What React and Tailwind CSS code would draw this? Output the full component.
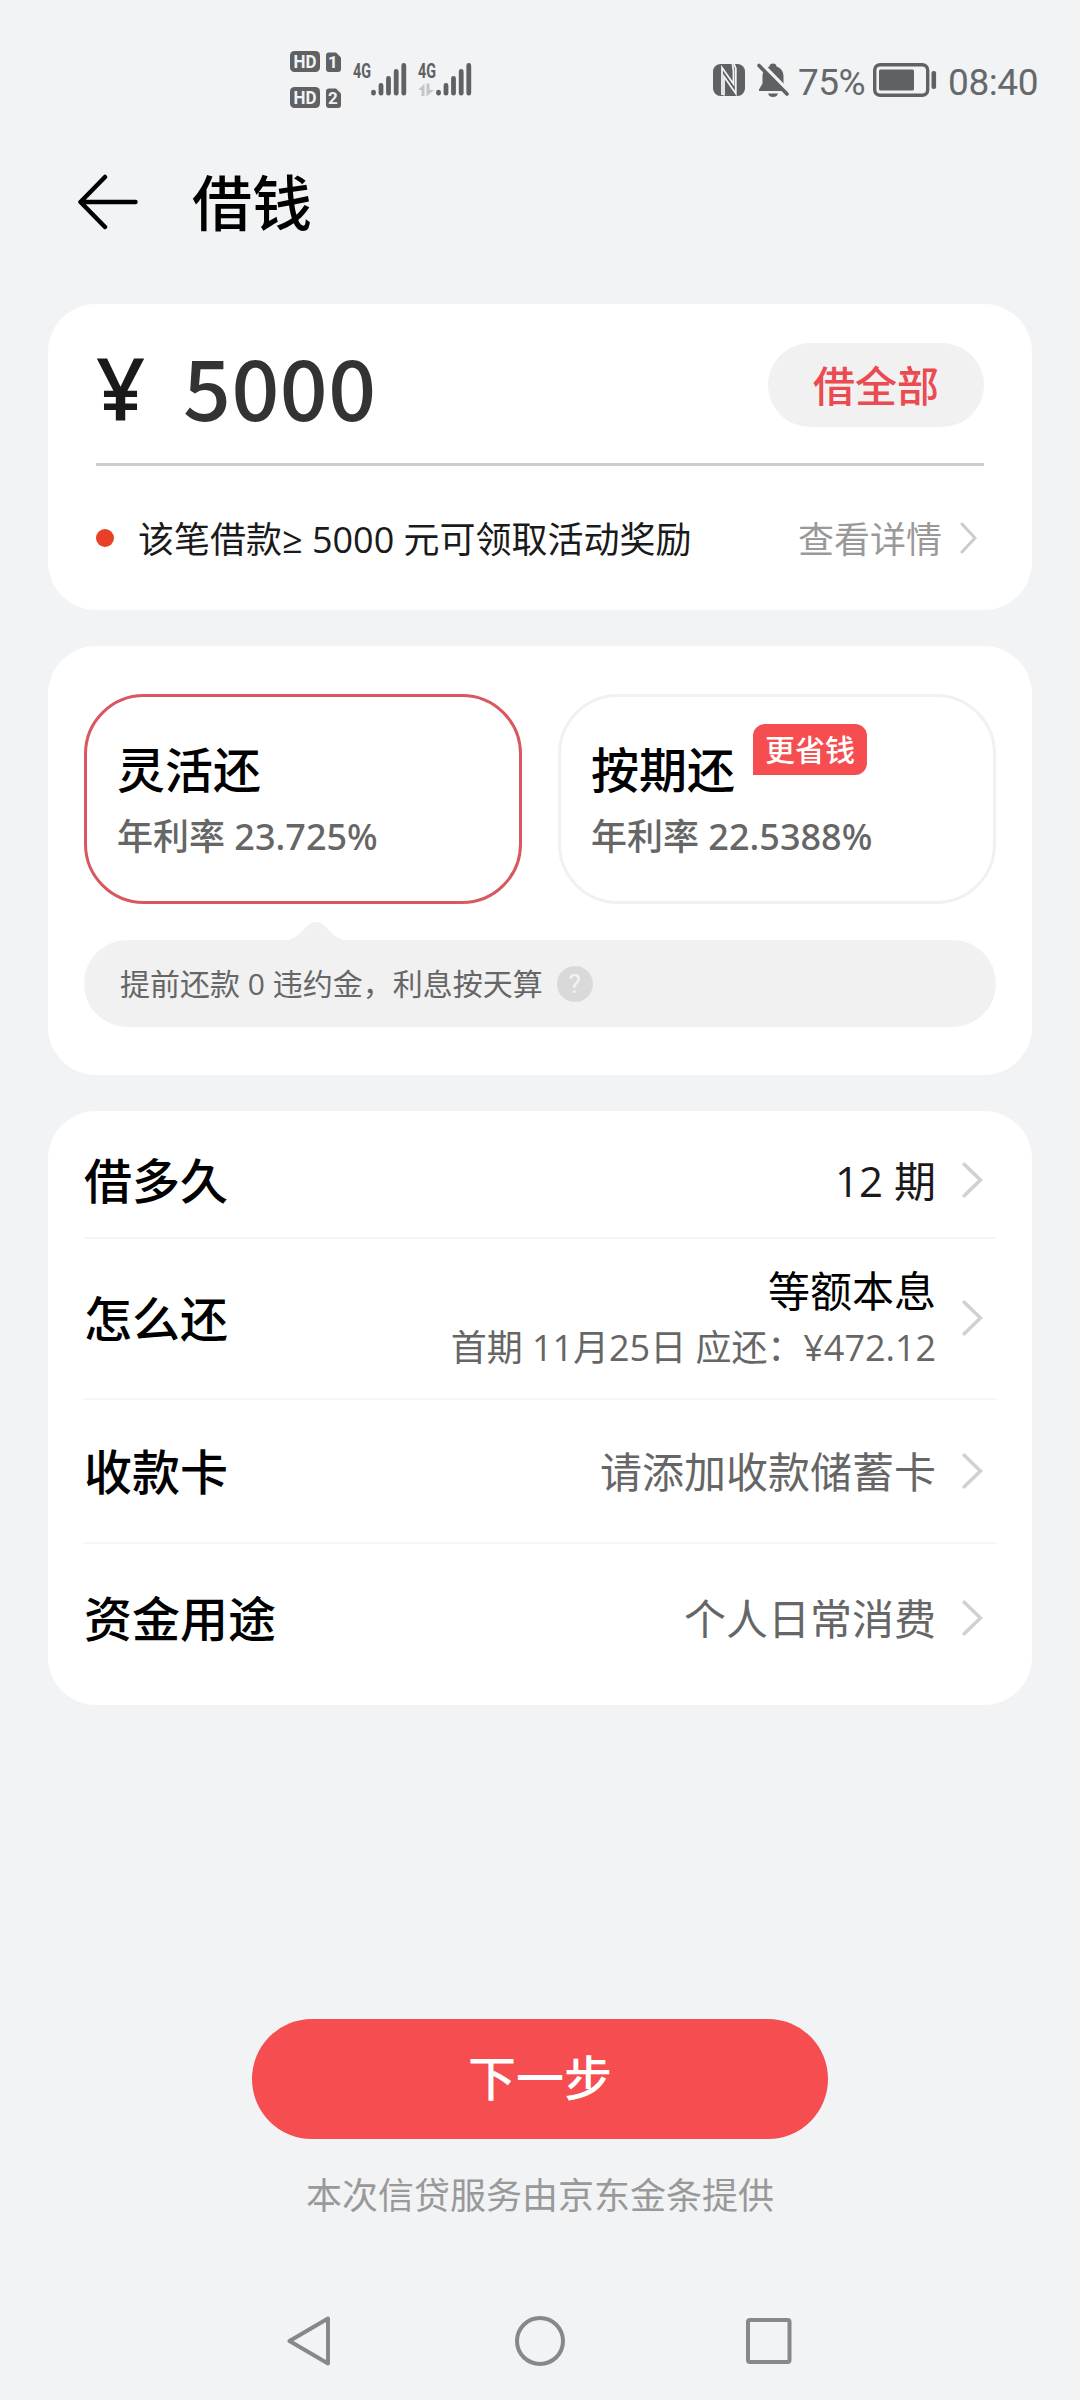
import React from "react";

const INK = "#5f6163";

const plans = [
  { name: "灵活还", rate: "年利率 23.725%", active: true },
  { name: "按期还", rate: "年利率 22.5388%", badge: "更省钱" },
];

function App() {
  return (
    <div className="flex h-[2400px] w-[1080px] flex-col overflow-hidden bg-[#f1f3f5] font-['Open_Sans','Noto_Sans_CJK_SC',sans-serif] text-black">
      <StatusBar />
      <Header />
      <main className="flex flex-col gap-9 px-12">
        <AmountCard />
        <PlanCard />
        <DetailCard />
      </main>
      <Footer />
      <NavBar />
    </div>
  );
}

function StatusBar() {
  return (
    <div className="flex h-[146px] shrink-0 items-start pt-[50px] pl-[290px]">
      <div className="flex flex-col gap-[14px]">
        <SimBadge slot="1" />
        <SimBadge slot="2" />
      </div>
      <Signal className="mt-[7px] ml-[11px]" />
      <Signal className="mt-[7px] ml-[11px]" data />
      <div className="ml-[241px] flex h-[60px] items-center font-[Roboto] text-[37px] leading-[60px] text-[#66686a]">
        <NfcIcon />
        <BellOffIcon />
        <span className="mt-[5px] ml-[9px] w-[75px] tracking-[-0.6px] whitespace-nowrap">75%</span>
        <BatteryIcon />
        <span className="mt-[5px] ml-[11px] tracking-[-0.4px]">08:40</span>
      </div>
    </div>
  );
}

function SimBadge({ slot }) {
  return (
    <svg width="52" height="22" viewBox="0 0 52 22" className="block">
      <rect x="0" y="1" width="30" height="21" rx="4.5" fill={INK} />
      <text x="15" y="17.8" textAnchor="middle" textLength="23" lengthAdjust="spacingAndGlyphs" fontFamily="Roboto, sans-serif" fontSize="18.5" fontWeight="700" fill="#f1f3f5">HD</text>
      <path d="M39 2.5h7l5 5V19a3 3 0 0 1-3 3h-9a3 3 0 0 1-3-3V5.500a3 3 0 0 1 3-3z" fill={INK} />
      <text x="43" y="18.2" textAnchor="middle" fontFamily="Roboto, sans-serif" fontSize="17" fontWeight="700" fill="#f1f3f5">{slot}</text>
    </svg>
  );
}

function Signal({ className, data }) {
  return (
    <svg width="54" height="41" viewBox="0 -5 54 41" className={className}>
      <text x="0" y="16" textLength="18" lengthAdjust="spacingAndGlyphs" fontFamily="Roboto, sans-serif" fontSize="20.500" fontWeight="700" fill={INK}>4G</text>
      <g stroke={INK} strokeWidth="4.800" strokeLinecap="round">
        <path d="M20.500 30.200v1M28 23.400v7.800M35.500 16.400v14.800M43.200 9.500v21.700M50.800 3.400v27.800" />
      </g>
      {data && (
        <g fill="#c3c5c7">
          <path d="M0 28l6.500-6.500V34H3.500v-6z" />
          <path d="M8.500 21.500h3V28H16L8.500 34.500z" />
        </g>
      )}
    </svg>
  );
}

function NfcIcon() {
  return (
    <svg width="32" height="32" viewBox="0 0 32 32">
      <rect width="32" height="32" rx="7.500" fill={INK} />
      <path d="M9 31V3.500L20.500 20V7L19.500 0" fill="none" stroke="#f1f3f5" strokeWidth="1.800" />
      <path d="M11 31.500V12.500L22.800 29.500V4.500L21 0" fill="none" stroke="#f1f3f5" strokeWidth="1.800" />
    </svg>
  );
}

function BellOffIcon() {
  return (
    <svg width="32" height="36" viewBox="0 0 32 36" className="ml-[12px]">
      <path d="M16 1.500c2.300 0 3.300 1.200 3.600 3 4.400 1.600 6.900 5.100 6.900 9.500v7.500l3 6v1.500H2v-1.500L5.500 21.500V14c0-4.400 2.500-7.900 6.900-9.500.3-1.800 1.300-3 3.600-3z" fill={INK} />
      <path d="M11 31.500h10c-.7 2.400-2.400 3.500-5 3.500s-4.300-1.100-5-3.500z" fill={INK} />
      <path d="M4.500 1.500L32 29.500" stroke="#f1f3f5" strokeWidth="3.600" />
      <path d="M2 3.500L30 32" stroke={INK} strokeWidth="3.600" strokeLinecap="round" />
    </svg>
  );
}

function BatteryIcon() {
  return (
    <svg width="64" height="34" viewBox="0 0 64 34">
      <rect x="1.700" y="1.700" width="53" height="30.600" rx="5.500" fill="none" stroke={INK} strokeWidth="3.400" />
      <rect x="6" y="6.500" width="35" height="21" rx="1.500" fill={INK} />
      <rect x="58.500" y="8" width="4.600" height="18" rx="2" fill={INK} />
    </svg>
  );
}

function Header() {
  return (
    <header className="flex h-[158px] shrink-0 items-start pl-[78px]">
      <svg width="60" height="56" viewBox="0 0 60 56" className="mt-[28px]" fill="none" stroke="#000" strokeWidth="4.500" strokeLinecap="round">
        <path d="M57.500 28H2.500M27 3L2.500 28L27 53" strokeLinejoin="round" />
      </svg>
      <h1 className="mt-[17px] ml-[54px] text-[60px] leading-[80px] font-medium">借钱</h1>
    </header>
  );
}

function Chevron({ small }) {
  return small ? (
    <svg width="17" height="32" viewBox="0 0 17 32" fill="none" stroke="#ccc" strokeWidth="3" strokeLinecap="round">
      <path d="M2 2L15 16L2 30" />
    </svg>
  ) : (
    <svg width="21" height="36" viewBox="0 0 21 36" className="-mt-px mr-[13px] ml-[26px]" fill="none" stroke="#d1d1d1" strokeWidth="3.600" strokeLinecap="round">
      <path d="M2.200 2.200L18.500 18L2.200 33.800" />
    </svg>
  );
}

function AmountCard() {
  return (
    <section className="h-[306px] rounded-[48px] bg-white px-12">
      <div className="flex h-[162px] items-center border-b-[3px] border-[#ccc] pt-[3px]">
        <span className="w-[87px] pt-[4px] text-[86px] leading-[120px] font-semibold text-[#1a1a1a]">¥</span>
        <span className="grow font-['Noto_Sans_CJK_SC'] text-[84px] leading-[120px] font-medium tracking-[0.5px] text-[#333]">5000</span>
        <button className="h-[84px] w-[216px] rounded-full bg-[#f1f1f1] pt-px text-[42px] leading-[80px] font-medium text-[#ea4a50]">借全部</button>
      </div>
      <div className="flex h-[144px] items-center pt-[3px] text-[36px] leading-[54px]">
        <i className="-mt-[4px] mr-[24px] size-[18px] rounded-full bg-[#e84026]" />
        <p className="grow text-[#1a1a1a]">该笔借款≥ 5000 元可领取活动奖励</p>
        <span className="mr-[18px] text-[#999]">查看详情</span>
        <div className="-mt-[3px] mr-[7px]">
          <Chevron small />
        </div>
      </div>
    </section>
  );
}

function PlanCard() {
  return (
    <section className="h-[429px] rounded-[48px] bg-white px-9 pt-12">
      <div className="grid grid-cols-2 gap-9">
        {plans.map((plan) => (
          <div
            key={plan.name}
            className={`h-[210px] rounded-[60px] border-[3px] pt-[38px] pl-[30px] ${plan.active ? "border-[#d9575f]" : "border-[#f1f1f1]"}`}
          >
            <div className="flex items-start">
              <h2 className="text-[48px] leading-[70px] font-medium">{plan.name}</h2>
              {plan.badge && (
                <span className="-mt-[11px] ml-[18px] h-[51px] w-[114px] rounded-[12px] rounded-bl-none bg-[#f54d50] text-center text-[30px] leading-[51px] font-medium text-white">
                  {plan.badge}
                </span>
              )}
            </div>
            <p className="mt-[7px] font-['Noto_Sans','Noto_Sans_CJK_SC',sans-serif] text-[36px] leading-[50px] font-medium text-[#666]">{plan.rate}</p>
          </div>
        ))}
      </div>
      <div className="relative mt-9 flex h-[87px] items-center rounded-full bg-[#f1f1f1] pl-9 text-[30px] text-[#666]">
        <svg width="64" height="19" viewBox="0 0 64 19" className="absolute -top-[18px] left-[200px]">
          <path d="M0 19C13 17 19 8 25 2.500C29 -0.800 35 -0.800 39 2.500C45 8 51 17 64 19z" fill="#f1f1f1" />
        </svg>
        <span>提前还款 0 违约金，利息按天算</span>
        <span className="ml-[14px] flex size-9 items-center justify-center rounded-full bg-[#d9d9d9] font-[Roboto] text-[26px] leading-9 text-[#f4f4f4]">?</span>
      </div>
    </section>
  );
}

function DetailCard() {
  return (
    <section className="flex h-[594px] flex-col rounded-[48px] bg-white px-9 py-3 text-[42px]">
      <div className="flex h-[114px] items-center">
        <Label>借多久</Label>
        <span className="text-[#1a1a1a]">12 期</span>
        <Chevron />
      </div>
      <div className="flex h-[161px] items-center border-t-2 border-[#f5f5f5]">
        <Label>怎么还</Label>
        <div className="text-right">
          <p className="leading-[58px]">等额本息</p>
          <p className="text-[36px] leading-[56px] tracking-[-0.04px] text-[#666]">首期 11月25日 应还：¥472.12</p>
        </div>
        <Chevron />
      </div>
      <div className="flex h-[144px] items-center border-t-2 border-[#f5f5f5]">
        <Label>收款卡</Label>
        <span className="text-[#666]">请添加收款储蓄卡</span>
        <Chevron />
      </div>
      <div className="flex h-[151px] items-center border-t-2 border-[#f5f5f5]">
        <Label>资金用途</Label>
        <span className="text-[#666]">个人日常消费</span>
        <Chevron />
      </div>
    </section>
  );
}

function Label({ children }) {
  return <h3 className="grow pt-px text-[48px] font-medium">{children}</h3>;
}

function Footer() {
  return (
    <footer className="mt-[314px] flex flex-col items-center">
      <button className="h-[120px] w-[576px] rounded-full bg-[#f54d50] pb-[3px] text-[48px] leading-[112px] font-medium text-white">下一步</button>
      <p className="mt-[30px] text-[36px] leading-[54px] text-[#999]">本次信贷服务由京东金条提供</p>
    </footer>
  );
}

function NavBar() {
  return (
    <nav className="mt-[93px] flex items-center pl-[286px]">
      <svg width="46" height="50" viewBox="0 0 46 50" fill="none" stroke="#868889" strokeWidth="4" strokeLinejoin="round">
        <path d="M42 2.500V47.500L3.500 25z" />
      </svg>
      <svg width="50" height="50" viewBox="0 0 50 50" className="ml-[183px]" fill="none" stroke="#868889" strokeWidth="4">
        <circle cx="25" cy="25" r="23" />
      </svg>
      <svg width="46" height="46" viewBox="0 0 46 46" className="ml-[181px]" fill="none" stroke="#868889" strokeWidth="4">
        <rect x="2" y="2" width="41.500" height="42" rx="2" />
      </svg>
    </nav>
  );
}

export default App;
